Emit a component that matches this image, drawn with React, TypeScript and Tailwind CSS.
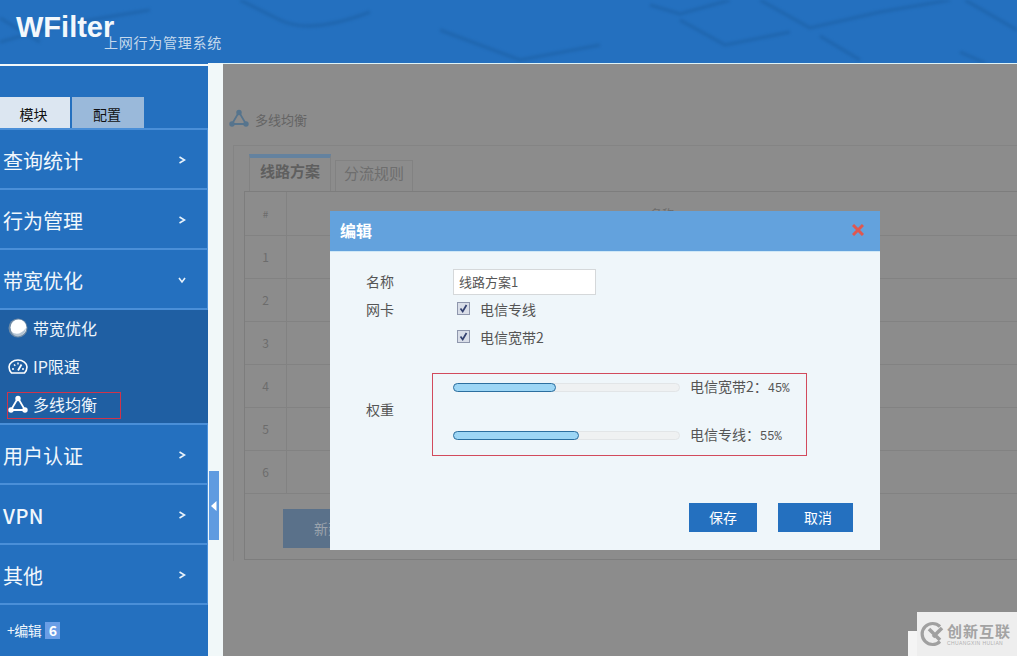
const cjk = { fontFamily: '"Noto Sans CJK SC", "Liberation Sans", sans-serif' };

function TriangleIcon({ color, size }: { color: string; size: number }) {
  return (
    <svg width={size} height={size} viewBox="0 0 20 20" fill="none">
      <path d="M10 4 L3 16 H17 Z" stroke={color} strokeWidth="1.8" />
      <circle cx="10" cy="4.5" r="2.7" fill={color} />
      <circle cx="3" cy="16" r="2.7" fill={color} />
      <circle cx="17" cy="16" r="2.7" fill={color} />
    </svg>
  );
}

function BallIcon() {
  return (
    <svg width="20" height="20" viewBox="0 0 20 20">
      <circle cx="10" cy="10" r="9.5" fill="#6f8ba6" />
      <circle cx="10.5" cy="9.5" r="8" fill="#ffffff" />
      <path d="M3.5 14 Q11 19 18 10 Q17.5 17 10 18.5 Q5.5 18 3.5 14 Z" fill="#b4c4d3" />
    </svg>
  );
}

function GaugeIcon() {
  return (
    <svg width="20" height="15" viewBox="0 0 20 15" fill="none" stroke="#ffffff" strokeWidth="1.6">
      <path d="M3.5 14 H16.5 A9 9 0 0 0 19 8 A9 7 0 0 0 1 8 A9 9 0 0 0 3.5 14 Z" />
      <path d="M10 11.5 L13.5 5.5" strokeWidth="1.8" />
      <path d="M4 10 H6 M6 5.5 L7.3 6.8 M10 3.5 V5.5 M14 10 H16" strokeWidth="1.4" />
    </svg>
  );
}

function Chevron({ down }: { down?: boolean }) {
  return (
    <svg width="8" height="8" viewBox="0 0 8 8" fill="none" stroke="#e8f2fb" strokeWidth="1.6">
      {down ? <path d="M1 2 L4 6 L7 2" /> : <path d="M1.5 1 L6.5 4 L1.5 7" />}
    </svg>
  );
}

function MenuRow({ label, open, latin }: { label: string; open?: boolean; latin?: boolean }) {
  return (
    <div className="flex h-[60px] shrink-0 items-center justify-between border-b-[2px] border-r border-[#4a8fd8] bg-[#2470bf] pl-[3px] pr-[21px] pt-[4px]">
      <span className={`text-[20px] text-[#f1f7fc] ${latin ? "font-medium tracking-[0.5px]" : ""}`}>{label}</span>
      <span className="mt-[-2px]">
        <Chevron down={open} />
      </span>
    </div>
  );
}

function SubRow({ icon, label, boxed }: { icon: React.ReactNode; label: string; boxed?: boolean }) {
  return (
    <div
      className={`flex h-[27px] w-[114px] items-center gap-[5px] pb-[3px] text-[16px] text-[#eef5fb] border ${
        boxed ? "border-[#d0344a]" : "border-transparent"
      }`}
    >
      <span className="flex w-5 justify-center">{icon}</span>
      <span className="whitespace-nowrap">{label}</span>
    </div>
  );
}

function Sidebar() {
  return (
    <aside className="flex w-[208px] shrink-0 flex-col bg-[#2470bf]">
      <div className="h-px bg-[#2470bf]" />
      <div className="h-[2px] bg-[#f2f8fa]" />
      <div className="mt-[31px] flex h-[31px] gap-[2px] text-[14px] text-[#111]">
        <div className="flex w-[70px] items-end justify-center bg-[#dce6f1] pb-[3px] pr-[3px]">模块</div>
        <div className="flex w-[72px] items-end justify-center bg-[#9ab9da] pb-[3px] pr-[2px]">配置</div>
      </div>
      <div className="h-[2px] border-r border-[#4a8fd8] bg-[#4a8fd8]" />
      <MenuRow label="查询统计" />
      <MenuRow label="行为管理" />
      <MenuRow label="带宽优化" open />
      <div className="flex h-[115px] shrink-0 flex-col gap-[11px] border-b-[2px] border-[#4a8fd8] bg-[#1f5fa3] pl-[7px] pt-[6px]">
        <SubRow icon={<BallIcon />} label="带宽优化" />
        <SubRow icon={<GaugeIcon />} label="IP限速" />
        <SubRow icon={<TriangleIcon color="#ffffff" size={20} />} label="多线均衡" boxed />
      </div>
      <MenuRow label="用户认证" />
      <MenuRow label="VPN" latin />
      <MenuRow label="其他" />
      <div className="flex items-center pl-[7px] pt-[15px] text-[14px] text-[#eef5fb]">
        <span className="tracking-[-0.5px]">+编辑</span>
        <span className="ml-[4px] flex h-[17px] w-[15px] items-center justify-center bg-[#6a9ee6] text-[14px] font-bold text-white">
          6
        </span>
      </div>
    </aside>
  );
}

function Gutter() {
  return (
    <div className="flex w-[15px] shrink-0 flex-col bg-[#f1f8f9] pl-[1px] pt-[408px]">
      <div className="flex h-[69px] w-[10px] items-center justify-center bg-[#5f9be0]">
        <svg width="6" height="10" viewBox="0 0 6 10">
          <path d="M5.5 0 L0 5 L5.5 10 Z" fill="#ffffff" />
        </svg>
      </div>
    </div>
  );
}

function TableRow({ n, head }: { n: string; head?: boolean }) {
  return (
    <div className={`flex border-b border-[#828282] ${head ? "h-[44px]" : "h-[43px]"}`}>
      <div className={`flex w-[42px] items-center justify-center border-r border-[#828282] text-[#6c6c6c] ${head ? "text-[10px]" : "text-[12px]"}`}>
        {n}
      </div>
      <div className="flex flex-1 items-start justify-center pt-[13px] text-[12px] text-[#6c6c6c]">{head ? "名称" : ""}</div>
    </div>
  );
}

function Main() {
  return (
    <main className="flex min-w-0 flex-1 flex-col overflow-hidden border-t border-[#dff3f7] bg-[#8c8c8c]">
      <div className="flex h-[71px] shrink-0 items-end gap-[6px] pb-[7px] pl-[6px] text-[13px] text-[#646464]">
        <TriangleIcon color="#56748d" size={20} />
        <span className="leading-[16px]">多线均衡</span>
      </div>
      <div className="ml-[10px] mt-[10px] h-[416px] w-[900px] shrink-0 border border-b-0 border-r-0 border-[#848484] pl-[10px] pt-[8px]">
        <div className="flex h-[37px] gap-[4px] pl-[5px]">
          <div className="flex w-[82px] items-center justify-center border-x border-t-[4px] border-x-[#828282] border-t-[#64829f] pb-[6px] text-[15px] font-semibold text-[#5f5f5f]">
            线路方案
          </div>
          <div className="mt-[6px] flex w-[78px] items-center justify-center border border-b-0 border-[#828282] pb-[5px] text-[15px] text-[#6e6e6e]">
            分流规则
          </div>
        </div>
        <div className="h-[369px] w-[794px] border border-[#7d7d7d]">
          <TableRow n="#" head />
          {["1", "2", "3", "4", "5", "6"].map((n) => (
            <TableRow key={n} n={n} />
          ))}
          <div className="ml-[38px] mt-[15px] flex h-[39px] w-[118px] items-center bg-[#5a718a] pl-[31px] text-[14px] text-[#9aa3ad]">
            新建
          </div>
        </div>
      </div>
    </main>
  );
}

function Check() {
  return (
    <span className="flex h-[13px] w-[13px] shrink-0 items-center justify-center border border-[#8f97ad] bg-[#d9dee8]">
      <svg width="9" height="9" viewBox="0 0 9 9" fill="none" stroke="#33416f" strokeWidth="1.7">
        <path d="M1.5 4.5 L3.7 7.5 L7.5 1" />
      </svg>
    </span>
  );
}

function Slider({ fill, label, value }: { fill: number; label: string; value: string }) {
  return (
    <div className="flex items-center">
      <div className="h-[9px] w-[227px] shrink-0 rounded-full border border-[#e2e5e7] bg-[#eff1f2]">
        <div
          className="-m-px h-[9px] rounded-full border border-[#2c6f9f] bg-[#9dd6f5]"
          style={{ width: fill }}
        />
      </div>
      <span className="ml-[10px] whitespace-nowrap text-[14px] text-[#555]">
        {label}
        <span className="font-['Liberation_Mono'] text-[12px]">{value}</span>
      </span>
    </div>
  );
}

function Modal() {
  return (
    <div className="absolute left-[330px] top-[211px] flex h-[339px] w-[550px] flex-col bg-[#eff6fa] text-[#555]">
      <div className="flex h-[41px] shrink-0 items-center justify-between border-b border-[#cfe8f7] bg-[#63a2dd] pb-[2px] pl-[10px] pr-[16px]">
        <span className="text-[16px] font-bold text-white">编辑</span>
        <svg width="12" height="12" viewBox="0 0 12 12" stroke="#e0574f" strokeWidth="3">
          <path d="M1 1 L11 11 M11 1 L1 11" />
        </svg>
      </div>
      <div className="flex flex-col pl-9 pt-[17px] text-[14px]">
        <div className="flex h-[26px] items-center">
          <span className="w-[87px] pb-[2px]">名称</span>
          <div className="flex h-[26px] w-[143px] items-center border border-[#d5d8da] bg-white pl-[5px] text-[13px]">
            线路方案1
          </div>
        </div>
        <div className="mt-[2px] flex flex-col gap-[6px]">
          <div className="flex h-[22px] items-center">
            <span className="w-[91px] pt-[2px]">网卡</span>
            <Check />
            <span className="ml-[10px] pt-[2px] text-[14px]">电信专线</span>
          </div>
          <div className="flex h-[22px] items-center">
            <span className="w-[91px]" />
            <Check />
            <span className="ml-[10px] pt-[2px] text-[14px]">电信宽带2</span>
          </div>
        </div>
        <div className="mt-[26px] flex items-center">
          <span className="mt-[-10px] w-[66px]">权重</span>
          <div className="flex h-[83px] w-[375px] flex-col gap-[26px] border border-[#d24a5c] pl-5 pt-[2px]">
            <Slider fill={103} label="电信宽带2：" value="45%" />
            <Slider fill={126} label="电信专线：" value="55%" />
          </div>
        </div>
        <div className="mt-[47px] flex gap-[21px] pl-[323px] text-[14px] text-white">
          <div className="flex h-[29px] w-[68px] items-center justify-center bg-[#2470bf]">保存</div>
          <div className="flex h-[29px] w-[75px] items-center justify-center bg-[#2470bf] pl-[5px]">取消</div>
        </div>
      </div>
    </div>
  );
}

function Watermark() {
  return (
    <>
      <div className="absolute bottom-0 right-[100px] h-[25px] w-[9px] bg-[#f4f4f4]" />
      <div className="absolute bottom-0 right-0 flex h-[44px] w-[100px] items-center bg-[#eeeeee] pl-[3px]">
        <svg width="26" height="26" viewBox="0 0 26 26" fill="none" stroke="#a0a0a0" strokeWidth="3.2">
          <path d="M20 5.5 A10.5 10.5 0 1 0 20 20.5" />
          <path d="M9 8 L20 19 M22 7 L13 16" strokeWidth="3.6" />
        </svg>
        <div className="ml-[1px] flex flex-col">
          <span className="text-[15px] font-bold leading-[16px] tracking-[1px] text-[#a3a3a3]">创新互联</span>
          <span className="mt-[1px] whitespace-nowrap font-['Liberation_Sans'] text-[5px] leading-[6px] tracking-[0.4px] text-[#b0b0b0]">
            CHUANGXIN HULIAN
          </span>
        </div>
      </div>
    </>
  );
}

export default function App() {
  return (
    <div className="relative flex h-[656px] w-[1017px] flex-col overflow-hidden bg-[#8c8c8c]" style={cjk}>
      <header className="relative h-[63px] shrink-0 overflow-hidden bg-[#2470bf]">
        <svg className="absolute inset-0 blur-[1.5px]" width="1017" height="63" fill="none" stroke="#1c5fa3" strokeWidth="3.5" opacity="0.55">
          <path d="M0 18 L40 42 M0 42 L60 25 L150 10 M240 0 L280 20 Q310 35 370 12 M440 30 L520 60 L600 45" />
          <path d="M650 5 L680 14 L730 0 M680 20 L725 45 L790 32 M760 0 L810 28 L880 12 L950 0 M820 36 L860 60 M965 0 L1017 30 M960 52 L985 63" />
        </svg>
        <span className="absolute left-[16px] top-[8px] font-['Liberation_Sans'] text-[29px] font-bold leading-[38px] text-[#f3f8fc]">
          WFilter
        </span>
        <span className="absolute left-[104px] top-[32px] text-[14px] leading-[20px] tracking-[0.75px] text-[#c5d9ec]">
          上网行为管理系统
        </span>
      </header>
      <div className="flex min-h-0 flex-1">
        <Sidebar />
        <Gutter />
        <Main />
      </div>
      <Modal />
      <Watermark />
    </div>
  );
}
